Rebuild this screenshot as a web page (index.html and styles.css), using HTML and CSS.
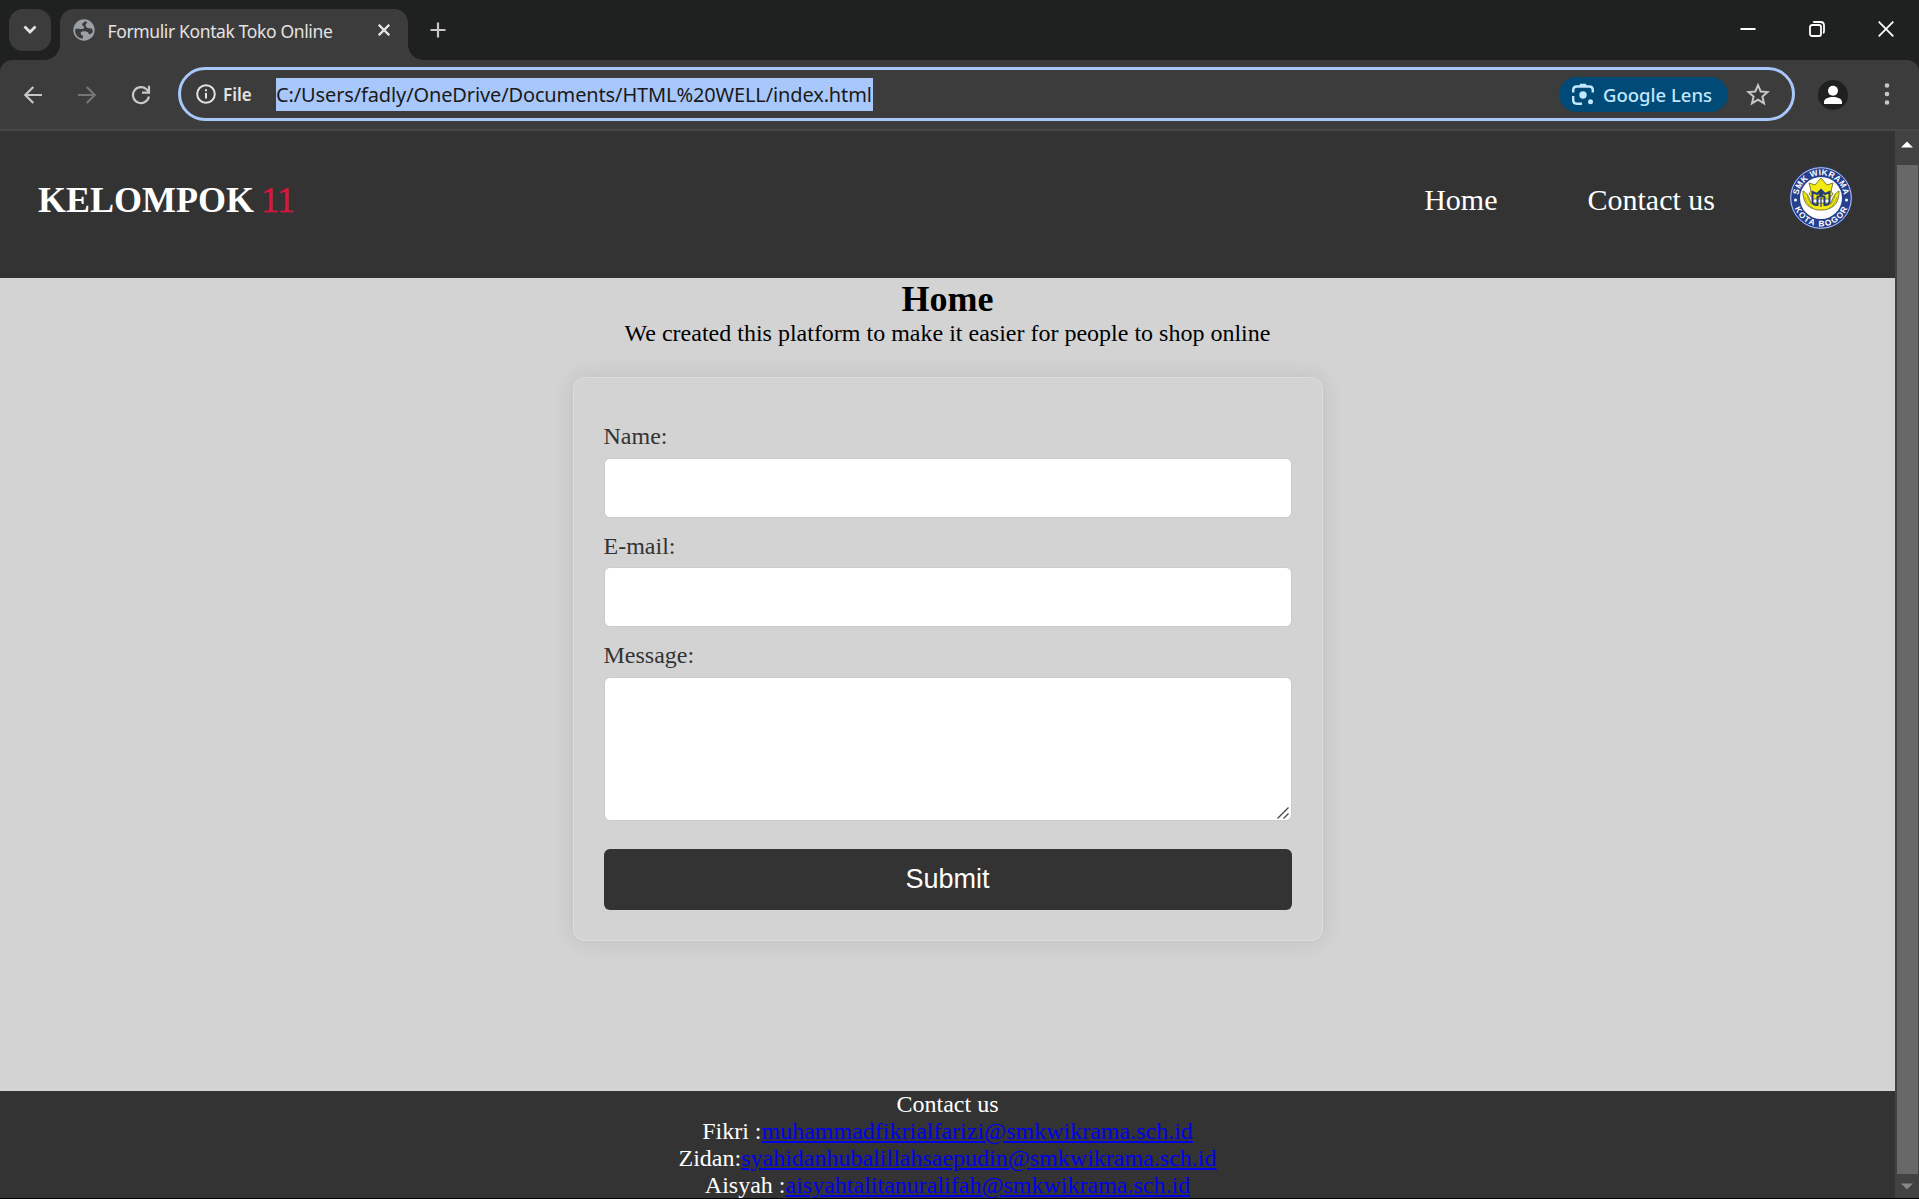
FILE: index.html
```html
<!DOCTYPE html>
<html lang="en">
<head>
<meta charset="utf-8">
<title>Formulir Kontak Toko Online</title>
<link rel="stylesheet" href="styles.css">
</head>
<body>
<div class="tabstrip">
  <div class="tab-search">
    <svg width="14" height="10" viewBox="0 0 14 10" fill="none" stroke="#e3e3e3" stroke-width="2.8"><path d="M1.500 1.500 7 7l5.500-5.500"/></svg>
  </div>
  <div class="tab">
    <svg class="globe" width="22" height="22" viewBox="0 0 22 22"><circle cx="11" cy="11" r="10.700" fill="#9aa0a6"/><path d="M12.500 2.300c-2 1-3.500 2-3.300 3.700.1 1.300 1.800.9 1.900 2.400 0 1.400-1.600 1.700-3.600 1.600-2.500 0-4.800-.6-5.300.4-.4 4 1.800 7.600 5.500 8.900 2 .7 2.500-.2 2.400-1.800-.2-1.800-2.500-1.300-2.400-3.300 0-1.500 1.300-1.900 3.700-1.900 2.700 0 4.200 1 4.300 2.800 1.300.4 2.600-.3 4-1.900.4-3.100-1-4.200-3.200-4-2.200.1-4.200-1-4-3.100.1-1.500 1.800-1.700 1.700-2.900z" fill="#3c3c3c"/></svg>
    <span class="tab-title">Formulir Kontak Toko Online</span>
    <svg class="tab-close" width="12" height="12" viewBox="0 0 12 12" stroke="#e3e3e3" stroke-width="2.300"><path d="m.7.7 10.600 10.600M11.300.7.7 11.300"/></svg>
  </div>
  <svg class="new-tab" width="16" height="16" viewBox="0 0 16 16" stroke="#c7c7c7" stroke-width="2.200"><path d="M8 .5v15M.5 8h15"/></svg>
  <div class="window-buttons">
    <svg width="16" height="16" viewBox="0 0 16 16" stroke="#fff" stroke-width="2"><path d="M.5 8h15"/></svg>
    <svg width="16" height="16" viewBox="0 0 16 16" fill="none" stroke="#fff" stroke-width="1.800"><rect x="1" y="4" width="11" height="11" rx="2"/><path d="M4 1.400Q4.500 1 6 1h5.500Q15 1 15 4.500V10q0 1.500-.8 2.200"/></svg>
    <svg width="16" height="16" viewBox="0 0 16 16" stroke="#fff" stroke-width="1.800"><path d="m.7.7 14.600 14.600M15.300.7.7 15.300"/></svg>
  </div>
</div>
<div class="toolbar">
  <div class="nav-buttons">
    <svg width="20" height="20" viewBox="0 0 20 20" fill="none" stroke="#c7c7c7" stroke-width="2.200"><path d="M19 10H2.500M10.300 2 2.300 10l8 8"/></svg>
    <svg width="20" height="20" viewBox="0 0 20 20" fill="none" stroke="#757575" stroke-width="2.200"><path d="M1 10h16.500M9.700 2l8 8-8 8"/></svg>
    <svg width="20" height="20" viewBox="0 0 20 20" fill="none" stroke="#c7c7c7" stroke-width="2.200"><path d="M17.900 11.500A8 8 0 1 1 15.500 4.200L18 6.800M18 .8v6.900h-7"/></svg>
  </div>
  <div class="omnibox">
    <svg class="info" width="20" height="20" viewBox="0 0 20 20" fill="none" stroke="#e3e3e3" stroke-width="2"><circle cx="10" cy="10" r="8.800"/><path d="M10 9v5.500M10 5.300v2"/></svg>
    <span class="scheme">File</span>
    <span class="url"><span class="url-text">C:/Users/fadly/OneDrive/Documents/HTML%20WELL/index.html</span></span>
    <div class="lens">
      <svg width="22" height="22" viewBox="0 0 22 22" fill="none" stroke="#c2e7ff" stroke-width="2.400"><path d="M1.200 9.500V7q0-3.500 3.500-3.500h12.600q3.500 0 3.500 3.500v2.500M1.200 13v4q0 3.700 3.500 3.700H10"/><path d="M7 3 8.200.8h5.600L15 3z" fill="#c2e7ff" stroke="none"/><circle cx="11" cy="12" r="3.700" fill="#c2e7ff" stroke="none"/><circle cx="18.500" cy="18.800" r="2.500" fill="#c2e7ff" stroke="none"/></svg>
      <span class="lens-label">Google Lens</span>
    </div>
    <svg class="star" width="24" height="23" viewBox="0 0 24 23" fill="none" stroke="#c7c7c7" stroke-width="2"><path d="m12 2.200 2.700 6.300 6.900.6-5.200 4.500 1.600 6.700-6-3.600-6 3.600 1.600-6.700-5.200-4.500 6.900-.6z"/></svg>
  </div>
  <svg class="avatar" width="30" height="30" viewBox="0 0 30 30"><circle cx="15" cy="15" r="15" fill="#1f2020"/><circle cx="15" cy="10.700" r="5" fill="#fff"/><path d="M6 24v-2.200c0-3.300 5-4.800 9-4.800s9 1.500 9 4.800V24z" fill="#fff"/></svg>
  <svg class="menu" width="6" height="22" viewBox="0 0 6 22" fill="#c7c7c7"><circle cx="3" cy="2.500" r="2.300"/><circle cx="3" cy="11" r="2.300"/><circle cx="3" cy="19.500" r="2.300"/></svg>
</div>
<div class="viewport">
  <div class="page">
    <header class="site-header">
      <h1 class="brand">KELOMPOK <span class="brand-number">11</span></h1>
      <nav class="site-nav"><span>Home</span><span>Contact us</span></nav>
      <svg class="crest" width="64" height="64" viewBox="0 0 64 64">
        <defs>
          <path id="arc-top" d="M9.200 32a22.800 22.800 0 0 1 45.600 0"/>
          <path id="arc-bottom" d="M3.600 32a28.400 28.400 0 0 0 56.800 0"/>
        </defs>
        <circle cx="32" cy="32" r="31.500" fill="#25408f"/>
        <circle cx="32" cy="32" r="30.300" fill="none" stroke="#e8ecf5" stroke-width=".8"/>
        <circle cx="32" cy="32" r="21" fill="#fff"/>
        <g fill="#f4ea12" stroke="#70742f" stroke-width=".9">
          <path d="M14 25c0 10 3 17 15 19h6c12-2 15-9 15-19-4 2-6 6-8 12H22c-2-6-4-10-8-12z"/>
          <path d="m20 17 6 2 6-7 6 7 6-2-2 8 2 3-4 5H24l-4-5 2-3z"/>
        </g>
        <path d="M16 31c2 6 4 9 8 11M18 28c1 6 3 9 5 11M48 31c-2 6-4 9-8 11M46 28c-1 6-3 9-5 11" stroke="#8f9426" stroke-width=".8" fill="none"/>
        <path d="M23.500 26v9.500q0 3.500 5 3.500v-8l3.500-1.500 3.500 1.500v8q5 0 5-3.500V26l-4.500 2-4-4-4 4z" fill="none" stroke="#243b76" stroke-width="2"/>
        <path d="M29 28l3-3 3 3-3 2z" fill="#243b76"/>
        <path d="M32 31v10" stroke="#243b76" stroke-width="1.200"/>
        <circle cx="6.500" cy="34" r="1.500" fill="#fff"/><circle cx="57.500" cy="34" r="1.500" fill="#fff"/>
        <text class="crest-text"><textPath href="#arc-top" startOffset="50%" textLength="65">SMK WIKRAMA</textPath></text>
        <text class="crest-text"><textPath href="#arc-bottom" startOffset="50%" textLength="68">KOTA BOGOR</textPath></text>
      </svg>
    </header>
    <main class="content">
      <h2 class="content-title">Home</h2>
      <p class="tagline">We created this platform to make it easier for people to shop online</p>
      <form class="contact-form">
        <label class="field-label" for="name">Name:</label>
        <input class="field" id="name" type="text">
        <label class="field-label" for="email">E-mail:</label>
        <input class="field email" id="email" type="email">
        <label class="field-label" for="message">Message:</label>
        <div class="message-wrap">
          <textarea class="field message" id="message"></textarea>
          <svg class="grip" width="12" height="12" viewBox="0 0 12 12" stroke="#4a4a4a" stroke-width="1.400"><path d="M.5 11.500l11-11M6.500 11.500l5-5"/></svg>
        </div>
        <button class="submit" type="button">Submit</button>
      </form>
    </main>
    <footer class="site-footer">
      <p>Contact us</p>
      <p>Fikri :<a href="#">muhammadfikrialfarizi@smkwikrama.sch.id</a></p>
      <p>Zidan:<a href="#">syahidanhubalillahsaepudin@smkwikrama.sch.id</a></p>
      <p>Aisyah :<a href="#">aisyahtalitanuralifah@smkwikrama.sch.id</a></p>
    </footer>
  </div>
  <div class="scrollbar">
    <svg width="12" height="7" viewBox="0 0 12 7"><path d="M6 .5 12 6.500H0z" fill="#fff"/></svg>
    <div class="thumb"></div>
    <svg width="12" height="7" viewBox="0 0 12 7"><path d="M0 .5h12L6 6.500z" fill="#878787"/></svg>
  </div>
</div>
</body>
</html>
```
FILE: styles.css
```css
* { box-sizing: border-box; margin: 0; padding: 0; }
html, body { height: 100%; overflow: hidden; }
body {
  display: flex;
  flex-direction: column;
  border-bottom: 1px solid #000;
  background: #1f2120;
  font-family: "Liberation Serif", "Times New Roman", serif;
  font-size: 24px;
  line-height: 27px;
}
svg { display: block; flex: none; }

/* Browser frame */
.tabstrip {
  display: flex;
  flex: none;
  height: 60px;
  padding: 9px 10px 0 9px;
  font-family: "Noto Sans", sans-serif;
}
.tab-search {
  display: flex;
  align-items: center;
  justify-content: center;
  width: 42px;
  height: 42px;
  border-radius: 14px;
  background: #3c3c3c;
}
.tab {
  position: relative;
  display: flex;
  width: 348px;
  height: 51px;
  margin-left: 9px;
  padding: 0 18px 0 13px;
  border-radius: 14px 14px 0 0;
  background: #3c3c3c;
}
.tab::before, .tab::after {
  content: "";
  position: absolute;
  bottom: 0;
  width: 15px;
  height: 15px;
}
.tab::before { left: -15px; background: radial-gradient(circle at 0 0, transparent 14.500px, #3c3c3c 15px); }
.tab::after { right: -15px; background: radial-gradient(circle at 100% 0, transparent 14.500px, #3c3c3c 15px); }
.globe { margin-top: 10px; }
.tab-title {
  margin: 9px 0 0 12.500px;
  color: #e3e3e3;
  font-size: 17.500px;
  line-height: 26px;
  white-space: nowrap;
  letter-spacing: -.37px;
}
.tab-close { margin: 15px 0 0 auto; }
.new-tab { margin: 13px 0 0 22px; }
.window-buttons { display: flex; gap: 53px; margin: 12px 15px 0 auto; }
.toolbar {
  display: flex;
  align-items: center;
  flex: none;
  height: 71px;
  padding: 0 29px 2px 23px;
  border-bottom: 2px solid #474747;
  border-radius: 12px 12px 0 0;
  background: #3c3c3c;
  font-family: "Noto Sans", sans-serif;
}
.nav-buttons { display: flex; gap: 34px; margin-top: 2px; }
.omnibox {
  display: flex;
  align-items: center;
  width: 1617px;
  height: 54px;
  margin-left: 27px;
  padding: 1px 22px 0 15px;
  border: 3px solid #a8c7fa;
  border-radius: 27px;
}
.scheme { margin-left: 7px; color: #e3e3e3; font-size: 17px; font-weight: 600; width: 31px; }
.url {
  width: 597px;
  height: 33px;
  margin-left: 22px;
  background: #a8c7fa;
  color: #1a1a1a;
  font-size: 20px;
  line-height: 33px;
  white-space: nowrap;
}
.url-text { letter-spacing: -.13px; }
.lens {
  display: flex;
  align-items: center;
  width: 169px;
  height: 35px;
  margin-left: auto;
  padding-left: 13px;
  border-radius: 18px;
  background: #004a77;
  color: #c2e7ff;
}
.lens-label { margin-left: 9px; font-size: 18.500px; font-weight: 500; white-space: nowrap; }
.star { margin-left: 18px; }
.avatar { margin-left: 23px; margin-top: 2px; }
.menu { margin-left: auto; margin-top: 1px; }

/* Web page */
.viewport { display: flex; flex: 1; min-height: 0; }
.page { display: flex; flex-direction: column; flex: 1; background: #d3d3d3; overflow: hidden; }
.site-header {
  display: flex;
  flex: none;
  align-items: center;
  height: 147px;
  padding: 0 42px 14px 38px;
  background: #333;
  color: #fff;
}
.brand { margin-top: 5px; font-size: 36px; line-height: 41px; }
.brand-number { margin-left: -2px; color: #dc143c; font-weight: 400; letter-spacing: -.7px; -webkit-text-stroke: .4px #dc143c; }
.site-nav { display: flex; gap: 90px; margin: 5px 74px 0 auto; font-size: 30px; line-height: 34px; }
.crest-text {
  fill: #fff;
  font-family: "Liberation Sans", Arial, sans-serif;
  font-size: 8.300px;
  font-weight: 700;
  text-anchor: middle;
}
.content { flex: none; height: 813px; text-align: center; }
.content-title { padding-top: 1px; font-size: 36px; line-height: 41px; }
.tagline { margin-bottom: 30px; }
.contact-form {
  display: flex;
  flex-direction: column;
  width: 750px;
  height: 564px;
  margin: 0 auto;
  padding: 45px 30px 30px;
  border: 1px solid #ddd;
  border-radius: 12px;
  box-shadow: 0 0 22px rgba(0, 0, 0, .1);
  text-align: left;
}
.field-label { color: #333; }
.field {
  display: block;
  width: 100%;
  height: 60px;
  margin: 8px 0 14.500px;
  border: 1px solid #ccc;
  border-radius: 6px;
  outline: none;
  background: #fff;
}
.email { margin: 7.500px 0 15px; }
.message-wrap { position: relative; }
.message { height: 144px; margin-bottom: 28px; resize: none; }
.grip { position: absolute; right: 3px; bottom: 30px; }
.submit {
  height: 61px;
  padding-bottom: 2px;
  border: 0;
  border-radius: 6px;
  background: #333;
  color: #fff;
  font: 27px/30px "Liberation Sans", Arial, sans-serif;
}
.site-footer { flex: 1; background: #333; color: #fff; text-align: center; }
.site-footer a { color: #00e; }
.scrollbar {
  display: flex;
  flex-direction: column;
  align-items: center;
  width: 24px;
  padding: 10px 0 8px;
  background: #424242;
}
.thumb { width: 21px; flex: 1; margin: 17px 0 9px 1px; background: #686868; }
```
